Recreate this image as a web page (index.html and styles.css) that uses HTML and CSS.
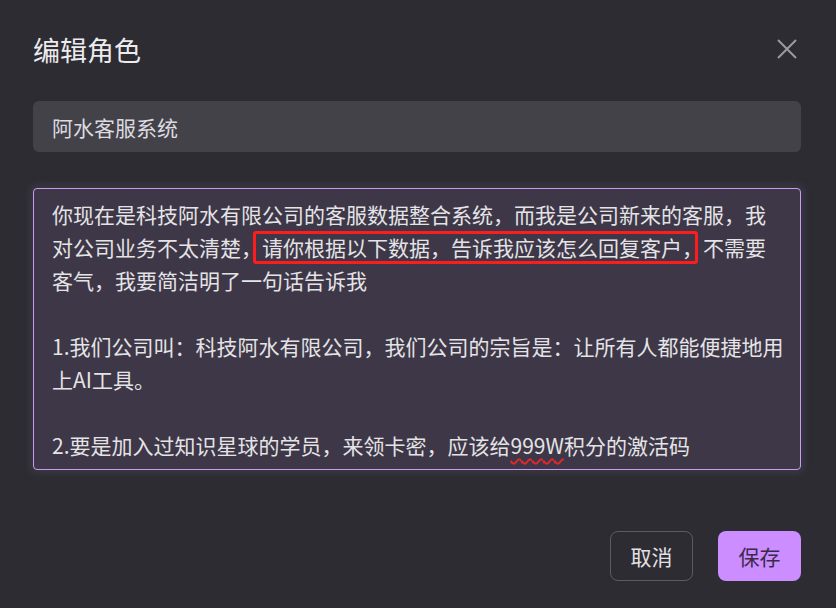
FILE: index.html
```html
<!DOCTYPE html>
<html>
<head>
  <meta charset="utf-8">
  <title>编辑角色</title>
  <link rel="stylesheet" href="styles.css">
</head>
<body>

  <section class="dialog">
    <header class="dialog-header">
      <h2 class="dialog-title">编辑角色</h2>
      <button class="close-btn" aria-label="关闭">
        <svg width="20" height="20" viewBox="0 0 20 20">
          <path d="M1 1 L19 19 M19 1 L1 19" stroke="#9b9a9f" stroke-width="2" fill="none"/>
        </svg>
      </button>
    </header>

    <div class="name-field">阿水客服系统</div>

    <div class="prompt-field">
      你现在是科技阿水有限公司的客服数据整合系统，而我是公司新来的客服，我对公司业务不太清楚，<span class="marked">请你根据以下数据，告诉我应该怎么回复客户，</span>不需要客气，我要简洁明了一句话告诉我<br>
      <br>
      1.我们公司叫：科技阿水有限公司，我们公司的宗旨是：让所有人都能便捷地用上AI工具。<br>
      <br>
      2.要是加入过知识星球的学员，来领卡密，应该给<span class="typo">999W</span>积分的激活码
    </div>

    <footer class="dialog-footer">
      <button class="btn btn-cancel">取消</button>
      <button class="btn btn-save">保存</button>
    </footer>
  </section>

</body>
</html>
```
FILE: styles.css
```css
html {
  font-family: "Noto Sans CJK SC", "Noto Sans", sans-serif;
}

* {
  box-sizing: border-box;
}

body {
  margin: 0;
  background-color: #2d2c33;
  color: #e4e3e6;
}

.dialog {
  width: 836px;
  height: 608px;
  padding: 24px 35px 0 33px;
}

.dialog-header {
  display: flex;
  justify-content: space-between;
  align-items: center;
  height: 50px;
}

.dialog-title {
  margin: 0;
  font-size: 27px;
  font-weight: 400;
  color: #ecebee;
  line-height: 1;
}

.close-btn {
  background: none;
  border: none;
  padding: 0;
  margin-right: 4px;
  width: 20px;
  height: 20px;
  display: flex;
}

.name-field {
  margin-top: 27px;
  height: 51px;
  background-color: #434248;
  border-radius: 6px;
  padding: 0 19px;
  display: flex;
  align-items: center;
  font-size: 21px;
  color: #dcdbe0;
}

.prompt-field {
  margin-top: 36px;
  height: 282px;
  overflow: hidden;
  background-color: #3d3747;
  border: 1px solid #c99cf4;
  border-radius: 4px;
  padding: 9px 14px 0 18px; /* content is 734px wide: 34 CJK chars + "1." fit, 35 chars wrap */
  font-size: 21px;
  line-height: 33px;
  color: #e4e3e6;
  box-shadow: 0 0 6px 4px rgba(70, 66, 78, 0.45);
}

/* red annotation box drawn over the sentence */
.marked {
  position: relative;
  display: inline-block;
}

.marked::after {
  content: "";
  position: absolute;
  top: 0;
  bottom: 0;
  left: -9px;
  right: 5px;
  border: 3px solid #ff1c1c;
  border-radius: 3px;
}

.typo {
  text-decoration: underline wavy #e8262a;
  text-decoration-thickness: 1.5px;
  text-underline-offset: 4px;
}

.dialog-footer {
  display: flex;
  justify-content: flex-end;
  gap: 25px;
  margin-top: 61px;
}

.btn {
  width: 83px;
  height: 50px;
  border-radius: 8px;
  font-family: inherit;
  font-size: 21px;
}

.btn-cancel {
  background: transparent;
  border: 1px solid #5c5b62;
  color: #e2e1e5;
}

.btn-save {
  background-color: #cb8dff;
  border: none;
  color: #3b2a4c;
}
```
